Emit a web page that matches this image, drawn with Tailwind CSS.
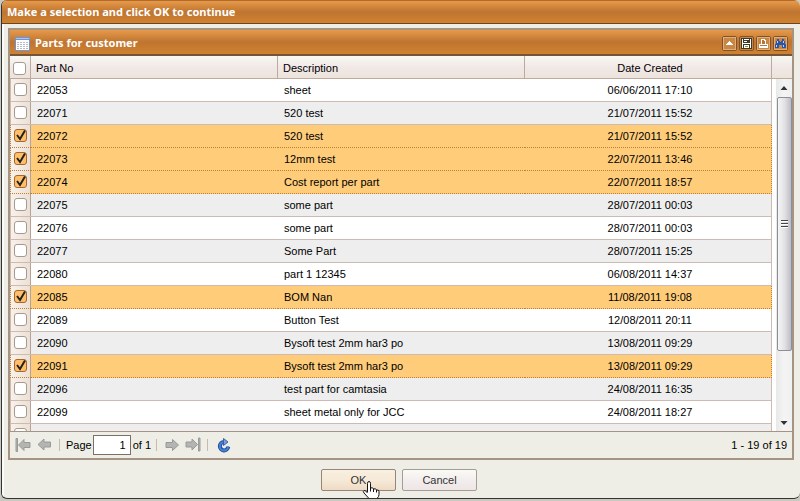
<!DOCTYPE html>
<html lang="en">
<head>
    <meta charset="UTF-8">
    <meta name="viewport" content="width=device-width, initial-scale=1.0">
    <title>Parts for customer</title>
    <script src="https://cdn.jsdelivr.net/npm/@tailwindcss/browser@4"></script>
</head>
<body class="bg-[#c9c9c0] font-['Liberation_Sans',Arial,sans-serif] text-[11px] leading-4 text-black">
<div class="flex h-screen pb-0.5 pl-px">
    <div role="dialog" aria-labelledby="dialogTitle" class="flex min-w-0 flex-1 flex-col overflow-hidden rounded-md border border-t-0 border-r-0 border-[#333] bg-[#eeeee6]">
        <h1 id="dialogTitle" class="flex h-6 shrink-0 items-center border-t border-b border-t-[#b5692a] border-b-[#6b4420] bg-linear-to-b from-[#e69a4a] via-[#bf7530] to-[#cf822f] px-[5px] font-['Noto_Sans',Tahoma,sans-serif] text-[11px] font-bold text-white">Make a selection and click OK to continue</h1>

        <div class="flex min-h-0 flex-1 flex-col border-l-2 border-[#fafafa] pt-1 pr-[6px] pl-1">
            <section class="flex min-h-0 flex-1 flex-col border-2 border-[#a59484]">
                <header class="flex h-[26px] shrink-0 items-center gap-[5px] border-b-2 border-[#75553a] bg-linear-to-b from-[#e69a4a] via-[#bf7530] to-[#cf822f] px-1 pt-0.5">
                    <svg class="mt-0.5 h-[14px] w-4 shrink-0" viewBox="0 0 16 14" shape-rendering="crispEdges">
                        <path fill="#6d95d8" d="M1 0h15v14H1z"/>
                        <path fill="#fff" d="M2 3h13v10H2z"/>
                        <path fill="#a9c4f2" d="M2 1h13v1H2z"/>
                        <path stroke="#b5bcc8" d="M3 5.500h11M3 7.500h11M3 9.500h11M3 11.500h11"/>
                        <path stroke="#fff" d="M5.500 3v10M8.500 3v10M11.500 3v10"/>
                    </svg>
                    <h2 class="flex-1 font-['Noto_Sans',Tahoma,sans-serif] text-[11px] font-bold text-white">Parts for customer</h2>
                    <div class="flex gap-[2px]">
                        <button type="button" aria-label="Collapse" class="size-[15px] rounded-xs border border-[#80522c] bg-[#c98745]">
                            <svg class="size-[13px]" viewBox="0 0 13 13" shape-rendering="crispEdges"><path fill="none" stroke="#e3ad74" d="M.5.5h12v12H.5z"/><path fill="#fff" d="M6 4h1v1h1v1h1v1h1v1H3V7h1V6h1V5h1z"/></svg>
                        </button>
                        <button type="button" aria-label="Save" class="size-[15px] rounded-xs border border-[#80522c] bg-[#c98745]">
                            <svg class="size-[13px]" viewBox="0 0 13 13" shape-rendering="crispEdges">
                                <path fill="#3e3824" d="M1 1h10l1 1v10H1z"/>
                                <path fill="#fff" d="M2 2h1v9H2zM10 2h1v9h-1zM4 2h5v1H4zM4 4h3v1H4zM3 6h7v1H3zM4 8h5v3H4z"/>
                                <path fill="#7ba23b" d="M5 9h3v1H5z"/>
                            </svg>
                        </button>
                        <button type="button" aria-label="Print" class="size-[15px] rounded-xs border border-[#80522c] bg-[#c98745]">
                            <svg class="size-[13px]" viewBox="0 0 13 13" shape-rendering="crispEdges">
                                <path fill="none" stroke="#e3ad74" d="M.5.5h12v12H.5z"/>
                                <path fill="#fff" d="M4 2h4v1h1v4h2v4H2V7h2z"/>
                                <path fill="#b5763a" d="M5 3h2v1h1v3H5zM3 8h7v1H3z"/>
                            </svg>
                        </button>
                        <button type="button" aria-label="Find" class="size-[15px] rounded-xs border border-[#80522c] bg-[#c98745]">
                            <svg class="size-[13px]" viewBox="0 0 13 13" shape-rendering="crispEdges">
                                <path fill="none" stroke="#e3ad74" d="M.5.5h12v12H.5z"/>
                                <path fill="#2c55a8" d="M3 2h2v2h1v1h1V4h1V2h2v2h1v3h1v4H8V8H5v3H1V7h1V4h1z"/>
                                <path fill="#b9d3fa" d="M3 4h1v2H3zM9 4h1v2H9zM2 8h1v2H2zM9 8h1v2H9z"/>
                            </svg>
                        </button>
                    </div>
                </header>

                <div class="flex min-h-0 flex-1 overflow-hidden bg-white">
                    <div class="min-w-0 flex-1 overflow-hidden">
                        <table class="w-full table-fixed border-separate border-spacing-0">
                            <colgroup>
                                <col class="w-[21px]">
                                <col>
                                <col>
                                <col>
                            </colgroup>
                            <thead>
                                <tr class="bg-linear-to-b from-[#f8f8f0] via-[#f1e8e8] to-[#ebe4d8] [&>th]:h-[23px] [&>th]:border-r [&>th]:border-b [&>th]:border-[#bda9a0] [&>th]:p-0 [&>th]:pt-[2px] [&>th]:font-normal">
                                    <th><input type="checkbox" aria-label="Select all parts" class="ml-[3px] block size-[13px] appearance-none rounded-[3px] border border-[#a59a90] bg-white"></th>
                                    <th class="text-left"><span class="px-[5px]">Part No</span></th>
                                    <th class="text-left"><span class="px-[5px]">Description</span></th>
                                    <th><span class="pl-1">Date Created</span></th>
                                </tr>
                            </thead>
                            <tbody id="partRows"></tbody>
                        </table>
                    </div>
                    <div class="flex w-5 shrink-0 flex-col">
                        <div class="h-[23px] shrink-0 border-b border-[#bda9a0] bg-linear-to-b from-[#f8f8f0] via-[#f1e8e8] to-[#ebe4d8]"></div>
                        <div class="ml-1 flex min-h-0 flex-1 flex-col items-center bg-linear-to-r from-[#e8e8e8] via-[#f4f4f4] to-[#f0f0f0]">
                            <svg class="h-[18px] w-4 shrink-0" viewBox="0 0 16 18"><path fill="#333" d="M4.500 11L8 7l3.500 4z"/></svg>
                            <div class="flex min-h-0 w-[15px] flex-[254] items-center justify-center rounded-xs border border-[#8e8f94] bg-linear-to-r from-[#f5f5f5] via-[#e2e2e6] to-[#bcbcc4]">
                                <svg class="h-2 w-[7px]" viewBox="0 0 7 8" shape-rendering="crispEdges"><path stroke="#444" d="M0 .5h7M0 3.500h7M0 6.500h7"/><path stroke="#fff" d="M0 1.500h7M0 4.500h7M0 7.500h7"/></svg>
                            </div>
                            <div class="flex-[62]"></div>
                            <svg class="h-[18px] w-4 shrink-0" viewBox="0 0 16 18"><path fill="#333" d="M4.500 8L8 12l3.500-4z"/></svg>
                        </div>
                    </div>
                </div>

                <footer class="flex h-[27px] shrink-0 items-center border-t border-[#a59484] px-[5px]">
                    <button type="button" aria-label="First page">
                        <svg class="h-4 w-4" viewBox="0 0 16 16"><path fill="#b4b4b2" stroke="#999" d="M1 1.500h1.500v13H1zM3.500 8L9 2.500v3h6v5H9v3z"/></svg>
                    </button>
                    <button type="button" aria-label="Previous page" class="ml-[6px]">
                        <svg class="h-4 w-4" viewBox="0 0 16 16"><path fill="#b4b4b2" stroke="#999" d="M1 7.500L7 2v3h6.500v5H7v3z"/></svg>
                    </button>
                    <span class="mx-[6px] h-3 w-px bg-[#c9b9ae]"></span>
                    <label for="pageNumber">Page</label>
                    <input id="pageNumber" type="text" value="1" class="mx-px h-5 w-[38px] border border-[#77716a] bg-white px-1 text-right">
                    <span class="ml-px">of 1</span>
                    <span class="mx-[5px] h-3 w-px bg-[#c9b9ae]"></span>
                    <button type="button" aria-label="Next page" class="ml-[2px]">
                        <svg class="h-4 w-4" viewBox="0 0 16 16"><path fill="#b4b4b2" stroke="#999" d="M14.500 8L8.500 2.500v3H2v5h6.500v3z"/></svg>
                    </button>
                    <button type="button" aria-label="Last page" class="ml-[5px]">
                        <svg class="h-4 w-4" viewBox="0 0 16 16"><path fill="#b4b4b2" stroke="#999" d="M13.500 1h1.500v13h-1.500zM12.500 7.500L7 2v3H1v5h6v3z"/></svg>
                    </button>
                    <span class="mx-[6px] h-3 w-px bg-[#c9b9ae]"></span>
                    <button type="button" aria-label="Refresh" class="ml-[2px]">
                        <svg class="h-4 w-4" viewBox="0 0 16 16">
                            <path fill="none" stroke="#23509f" stroke-width="4" d="M8 5a4.200 4.200 0 1 0 4.200 4.700"/>
                            <path fill="none" stroke="#4a80d6" stroke-width="2" d="M8 5a4.200 4.200 0 1 0 4.200 4.200"/>
                            <path fill="#7d9fd4" stroke="#3a62a8" d="M7.500 1.500L12 5 7.500 8.500z"/>
                        </svg>
                    </button>
                    <span class="ml-auto">1 - 19 of 19</span>
                </footer>
            </section>

            <div class="flex h-[38px] shrink-0 items-center justify-center gap-[6px] pt-0.5 pr-1 text-[#333]">
                <button type="button" class="relative h-[22px] w-[75px] rounded-xs border border-[#978677] bg-linear-to-b from-[#f8f0e0] via-[#f6e9d8] to-[#efdac4]">
                    OK
                    <svg class="absolute top-[11px] left-10 h-5 w-[18px]" viewBox="0 0 18 20">
                        <path fill="#fff" stroke="#111" d="M5.500 11V2.500q0-2 1.500-2t1.500 2V7q2.500-1 3 1 2.500-1 3 1 2.500-.5 2.500 1.500v3q0 2-2 4v2H7v-2L2 12q-1.500-2 0-2.500T5.500 12"/>
                        <path fill="none" stroke="#111" d="M8.500 7v3.500M11.500 8v3M14.500 9v2.500"/>
                    </svg>
                </button>
                <button type="button" class="h-[22px] w-[75px] rounded-xs border border-[#a39d98] bg-linear-to-b from-[#fafaf4] via-[#f3eeee] to-[#efe5e5]">Cancel</button>
            </div>
        </div>
    </div>
</div>

<script>
const parts = [
    ['22053', 'sheet', '06/06/2011 17:10'],
    ['22071', '520 test', '21/07/2011 15:52'],
    ['22072', '520 test', '21/07/2011 15:52', true],
    ['22073', '12mm test', '22/07/2011 13:46', true],
    ['22074', 'Cost report per part', '22/07/2011 18:57', true],
    ['22075', 'some part', '28/07/2011 00:03'],
    ['22076', 'some part', '28/07/2011 00:03'],
    ['22077', 'Some Part', '28/07/2011 15:25'],
    ['22080', 'part 1 12345', '06/08/2011 14:37'],
    ['22085', 'BOM Nan', '11/08/2011 19:08', true],
    ['22089', 'Button Test', '12/08/2011 20:11'],
    ['22090', 'Bysoft test 2mm har3 po', '13/08/2011 09:29'],
    ['22091', 'Bysoft test 2mm har3 po', '13/08/2011 09:29', true],
    ['22096', 'test part for camtasia', '24/08/2011 16:35'],
    ['22099', 'sheet metal only for JCC', '24/08/2011 18:27'],
    ['', '', '']
];

const plainRow = 'odd:bg-white even:bg-[#eeeeee] [&>td]:border-[#cdbbb2]';
const selectedRow = 'bg-[#ffcc7a] [&>td]:border-dotted [&>td]:border-[#c08030]';

document.getElementById('partRows').innerHTML = parts.map(([partNo, description, created, selected]) => `
    <tr class="[&>td]:h-[23px] [&>td]:border-b [&>td]:p-0 ${selected ? selectedRow : plainRow}">
        <td class="border-l bg-linear-to-r from-[#f8f2ec] to-[#ecdfd4] shadow-[inset_-1px_0_0_#b5a298]">
            <label class="relative mb-0.5 ml-[3px] block size-[13px]">
                <input type="checkbox" aria-label="Select part ${partNo}" ${selected ? 'checked' : ''} class="peer block size-[13px] appearance-none rounded-[3px] border border-[#a59a90] bg-white checked:border-[#a5672b] checked:bg-[#ffbf68]">
                <svg class="absolute inset-0 hidden size-[13px] peer-checked:block" viewBox="0 0 13 13"><path fill="none" stroke="#222" stroke-width="2" d="M3 6l3 4 5-8.500"/></svg>
            </label>
        </td>
        <td><span class="px-[6px]">${partNo}</span></td>
        <td><span class="px-[6px]">${description}</span></td>
        <td class="border-r text-center"><span class="pl-1">${created}</span></td>
    </tr>`).join('');
</script>
</body>
</html>
